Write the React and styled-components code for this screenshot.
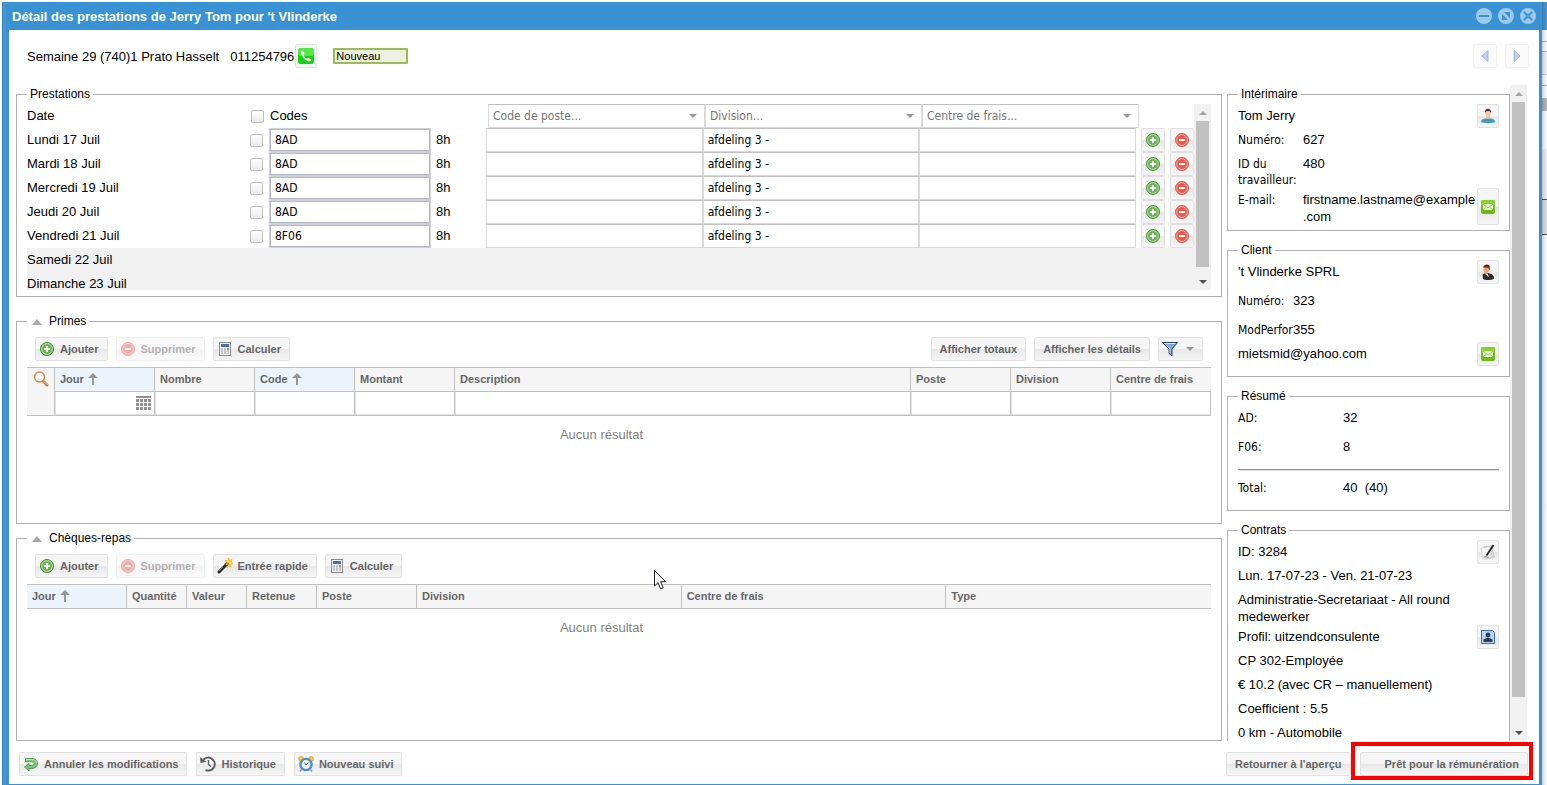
import React from "react";
import styled, { createGlobalStyle, css } from "styled-components";

const days = [
  { label: "Lundi 17 Juil", code: "8AD", hours: "8h" },
  { label: "Mardi 18 Juil", code: "8AD", hours: "8h" },
  { label: "Mercredi 19 Juil", code: "8AD", hours: "8h" },
  { label: "Jeudi 20 Juil", code: "8AD", hours: "8h" },
  { label: "Vendredi 21 Juil", code: "8F06", hours: "8h" },
];

const weekend = ["Samedi 22 Juil", "Dimanche 23 Juil"];

const filters = ["Code de poste...", "Division...", "Centre de frais..."];

const primeColumns = [
  { label: "Jour", width: 100, sorted: true, date: true },
  { label: "Nombre", width: 100 },
  { label: "Code", width: 100, sorted: true },
  { label: "Montant", width: 100 },
  { label: "Description" },
  { label: "Poste", width: 100 },
  { label: "Division", width: 100 },
  { label: "Centre de frais", width: 100 },
];

const chequeColumns = [
  { label: "Jour", width: 100, sorted: true },
  { label: "Quantité", width: 60 },
  { label: "Valeur", width: 60 },
  { label: "Retenue", width: 70 },
  { label: "Poste", width: 100 },
  { label: "Division" },
  { label: "Centre de frais" },
  { label: "Type" },
];

const Svg = ({ size = 16, children }) => (
  <svg width={size} height={size} viewBox={`0 0 ${size} ${size}`} aria-hidden="true">
    {children}
  </svg>
);

const PlusIcon = () => (
  <Svg>
    <circle cx="8" cy="8" r="6.5" fill="#6cb552" stroke="#3f8f35" />
    <circle cx="8" cy="8" r="5.4" fill="none" stroke="#b6dda8" />
    <path d="M8 5v6M5 8h6" stroke="#fff" strokeWidth="2" />
  </Svg>
);

const MinusIcon = () => (
  <Svg>
    <circle cx="8" cy="8" r="6.5" fill="#e9594a" stroke="#d0584c" />
    <circle cx="8" cy="8" r="5.4" fill="none" stroke="#f6aaa0" />
    <path d="M5 8h6" stroke="#fff" strokeWidth="2" />
  </Svg>
);

const CalculatorIcon = () => (
  <Svg>
    <rect x="2.5" y="1.5" width="11" height="13" fill="#f4f4f4" stroke="#8b8b8b" />
    <rect x="4" y="3" width="8" height="3" fill="#3f6fb5" />
    <path d="M4 8h8M4 10h8M4 12h8" stroke="#8a8fa0" strokeDasharray="2 1" />
    <path d="M10 8h2" stroke="#e0403a" />
  </Svg>
);

const WandIcon = () => (
  <Svg>
    <path
      d="M11.5 0l1 2.500L15 1.400l-.8 2.600 1.800 1.500-2.300.8.6 3-2.300-1.500L10 9.500l-.5-2.700L7 6l2.200-1.500L8.500 2l2.200.9z"
      fill="#ffd23a"
      stroke="#e5a416"
      strokeWidth=".6"
    />
    <path d="M2 14L10 6" stroke="#2b2b2b" strokeWidth="3" strokeLinecap="round" />
    <path d="M2.500 12.500L6 9" stroke="#8a8a8a" strokeWidth=".8" />
    <path d="M9 7l1.500-1.500" stroke="#f4f4f4" strokeWidth="1.500" />
  </Svg>
);

const FilterIcon = () => (
  <Svg>
    <path d="M.5 1.500h15L10 8v7l-3-2.500V8z" fill="#7fa6dc" stroke="#25415f" />
    <path d="M2.500 2.500h11" stroke="#dcebfa" />
    <path d="M4.500 4L8 8v4" fill="none" stroke="#c6dbf3" />
  </Svg>
);

const SearchIcon = () => (
  <Svg>
    <path d="M10.500 10.500l3.500 3.500" stroke="#b9824a" strokeWidth="3" strokeLinecap="round" />
    <path d="M11 10.500l3.500 3.500" stroke="#f3c88e" />
    <circle cx="6.500" cy="6" r="5" fill="#eef6fb" stroke="#cf8a4a" strokeWidth="1.500" />
  </Svg>
);

const UndoIcon = () => (
  <Svg>
    <path
      d="M2.500 2.500H9c3.200 0 5.500 2 5.500 4.800S12.200 12.500 9 12.500H6V15l-4.500-4L6 7.500v2h2.800c1.300 0 2-.8 2-2s-.7-1.700-2-1.700H2.500z"
      fill="#7cc576"
      stroke="#3e8c43"
      strokeWidth=".8"
    />
    <path d="M3 3.500h6c2.500 0 4.500 1.500 4.500 3.500" fill="none" stroke="#b9e3b3" />
  </Svg>
);

const HistoryIcon = () => (
  <Svg>
    <path d="M2.500 5A6.500 6.500 0 1 1 5.500 14" fill="none" stroke="#606060" strokeWidth="2" />
    <path d="M0 1l.5 6 6-1z" fill="#606060" />
    <path d="M8.500 4v4.500l2.500 2" fill="none" stroke="#606060" strokeWidth="1.500" />
  </Svg>
);

const AlarmIcon = () => (
  <Svg>
    <circle cx="3" cy="3" r="2.500" fill="#f7c63c" stroke="#d99a1d" strokeWidth=".6" />
    <circle cx="13" cy="3" r="2.500" fill="#f7c63c" stroke="#d99a1d" strokeWidth=".6" />
    <path d="M3.500 13.500L2 15.500M12.500 13.500l1.500 2" stroke="#999" strokeWidth="1.500" />
    <circle cx="8" cy="8.500" r="5.600" fill="#f4f9fd" stroke="#4f8fd0" strokeWidth="2.400" />
    <path d="M6.500 6.500L8 9l2.500-2.500" fill="none" stroke="#555" />
  </Svg>
);

const PhoneIcon = () => (
  <Svg>
    <rect width="16" height="16" rx="3" fill="#14d410" />
    <rect width="16" height="8" rx="3" fill="#55e64a" />
    <path
      d="M4.500 2.500c-1.500.8-1.800 2-1 4 1.200 3 3 5 6 6.500 1.500.7 3 .4 3.800-1l-2.800-2.200-1.500 1C7.500 10 6 8.500 5.300 6.700l1.200-1.300z"
      fill="#fff"
    />
  </Svg>
);

const MailIcon = () => (
  <Svg>
    <rect x="1" y="1" width="14" height="14" rx="2" fill="#6dbb10" />
    <rect x="1" y="1" width="14" height="6" rx="2" fill="#86d42b" />
    <rect x="3" y="5" width="10" height="6" fill="#f3fbe8" />
    <path d="M3 5l5 4 5-4M3 11l3.500-3M13 11L9.500 8" fill="none" stroke="#6fb52a" strokeWidth=".8" />
  </Svg>
);

const WorkerIcon = () => (
  <Svg>
    <path d="M1 14c0-2.500 2.500-3.800 7-3.800s7 1.300 7 3.800c-2 1.500-12 1.500-14 0z" fill="#3f9bc4" />
    <path d="M6.500 8.500h3l.5 2.500H6z" fill="#e9b48e" />
    <ellipse cx="8" cy="5.500" rx="2.700" ry="3.700" fill="#f3c7a5" />
    <path d="M5 5c-.3-3 1-4.300 3-4.300s3.300 1.300 3 4.300C10.500 3.500 9.500 3 8 3s-2.500.5-3 2z" fill="#4a3428" />
  </Svg>
);

const ClientIcon = () => (
  <Svg>
    <path d="M2.500 11c1-2 4.500-2.500 7-1.500 3 .6 4.700 2 4.500 5-2 2-8.500 2-11 .5z" fill="#2d2d2d" />
    <path d="M4.500 9.500h3L9 13z" fill="#fff" />
    <ellipse cx="6.300" cy="5.500" rx="2.900" ry="4" fill="#eba77c" />
    <path d="M3.200 3.500C3.500 1.500 5 .5 7.300.6c2.300.2 3.200 2 2.400 6L8.300 3.800z" fill="#6b2a1a" />
  </Svg>
);

const EditIcon = () => (
  <Svg>
    <path d="M4 2.500l8-1 2.500 12-9 1.500z" fill="#d6d6d6" stroke="#b8b8b8" strokeWidth=".5" />
    <path d="M1 4l9-1.500 1.500 11L3 15z" fill="#f3f3f3" stroke="#bcbcbc" strokeWidth=".5" />
    <path d="M13.500 1L6.500 11.500" stroke="#222" strokeWidth="1.800" />
    <path d="M6.500 11.500L5.500 13M4 13h5" fill="none" stroke="#777" strokeWidth=".8" />
  </Svg>
);

const ProfileIcon = () => (
  <Svg>
    <path d="M1.500 1.500h11l2 2v11h-13z" fill="#b8d5ee" stroke="#3e6ea8" />
    <circle cx="8" cy="6" r="2.400" fill="#2a3e5c" />
    <path d="M3.500 13v-2.500l3-1.500h3l3 1.500V13z" fill="#2a3e5c" />
  </Svg>
);

const NavArrow = ({ flip }) => (
  <Svg>
    <path
      d={flip ? "M5 2.500v11L11 8z" : "M11 2.500v11L5 8z"}
      fill="#bdd0f2"
      stroke="#8da9dc"
      strokeWidth=".8"
    />
  </Svg>
);

const SortArrow = () => (
  <svg width="10" height="12" viewBox="0 0 10 12" aria-hidden="true">
    <path d="M5 0l5 5H6v7H4V5H0z" fill="#979797" />
  </svg>
);

const Caret = ({ up, color = "#979797" }) => (
  <svg width="8" height="4" viewBox="0 0 8 4" aria-hidden="true">
    <path d={up ? "M0 4h8L4 0z" : "M0 0h8L4 4z"} fill={color} />
  </svg>
);

const CalendarIcon = () => (
  <Svg>
    <path d="M0 1h15v2H0z" fill="#8f8f8f" />
    <path d="M0 5.500h15M0 9.500h15M0 13.500h15" stroke="#8f8f8f" strokeWidth="3" strokeDasharray="3 1" />
  </Svg>
);

const Scrollbar = ({ thumb }) => (
  <Track>
    <Arrow>
      <Caret up color="#a3a3a3" />
    </Arrow>
    <Thumb style={{ height: thumb }} />
    <Arrow $end>
      <Caret color="#505050" />
    </Arrow>
  </Track>
);

const ColumnHead = ({ column }) => (
  <HeadCell $sorted={column.sorted} scope="col">
    {column.label}
    {column.sorted && <SortArrow />}
  </HeadCell>
);

const SectionTitle = ({ children }) => (
  <FoldLegend>
    <FoldButton type="button" aria-label={`Replier ${children}`}>
      <svg width="10" height="6" viewBox="0 0 10 6" aria-hidden="true">
        <path d="M5 0l5 6H0z" fill="#a8a8a8" />
      </svg>
    </FoldButton>
    {children}
  </FoldLegend>
);

const Prestations = () => (
  <Fieldset>
    <Legend>Prestations</Legend>
    <DayScroller>
      <DayTable>
        <thead>
          <DayRow $head>
            <th>Date</th>
            <td>
              <Checkbox type="checkbox" aria-label="Tout sélectionner" />
            </td>
            <th>Codes</th>
            <td />
            {filters.map((name) => (
              <td key={name}>
                <Combo>
                  <select aria-label={name} defaultValue="">
                    <option value="">{name}</option>
                  </select>
                  <Caret />
                </Combo>
              </td>
            ))}
          </DayRow>
        </thead>
        <tbody>
          {days.map((day) => (
            <DayRow key={day.label}>
              <th>{day.label}</th>
              <td>
                <Checkbox type="checkbox" aria-label={day.label} />
              </td>
              <td>
                <CodeInput aria-label={`Code ${day.label}`} defaultValue={day.code} />
              </td>
              <Hours>{day.hours}</Hours>
              <td>
                <CellInput aria-label={`Code de poste ${day.label}`} />
              </td>
              <td>
                <CellInput aria-label={`Division ${day.label}`} defaultValue="afdeling 3 -" />
              </td>
              <td>
                <CellInput aria-label={`Centre de frais ${day.label}`} />
              </td>
              <Actions>
                <IconButton type="button" aria-label="Ajouter">
                  <PlusIcon />
                </IconButton>
                <IconButton type="button" aria-label="Supprimer">
                  <MinusIcon />
                </IconButton>
              </Actions>
            </DayRow>
          ))}
          {weekend.map((label) => (
            <DayRow key={label} $off>
              <th>{label}</th>
            </DayRow>
          ))}
        </tbody>
      </DayTable>
      <Scrollbar thumb="146px" />
    </DayScroller>
  </Fieldset>
);

const Primes = () => (
  <Fieldset $grow>
    <SectionTitle>Primes</SectionTitle>
    <Toolbar>
      <Button type="button">
        <PlusIcon />
        Ajouter
      </Button>
      <Button type="button" disabled>
        <MinusIcon />
        Supprimer
      </Button>
      <Button type="button">
        <CalculatorIcon />
        Calculer
      </Button>
      <Spacer />
      <Button type="button" $plain>
        Afficher totaux
      </Button>
      <Button type="button" $plain>
        Afficher les détails
      </Button>
      <Button type="button" $menu aria-label="Filtre">
        <FilterIcon />
        <Caret />
      </Button>
    </Toolbar>
    <Grid>
      <colgroup>
        <col width="28" />
        {primeColumns.map((column) => (
          <col key={column.label} width={column.width} />
        ))}
      </colgroup>
      <thead>
        <tr>
          <SearchCell rowSpan="2">
            <SearchIcon />
          </SearchCell>
          {primeColumns.map((column) => (
            <ColumnHead key={column.label} column={column} />
          ))}
        </tr>
        <tr>
          {primeColumns.map((column) => (
            <FilterCell key={column.label}>
              <FilterBox>
                <input aria-label={column.label} />
                {column.date && <CalendarIcon />}
              </FilterBox>
            </FilterCell>
          ))}
        </tr>
      </thead>
    </Grid>
    <Empty>Aucun résultat</Empty>
  </Fieldset>
);

const Cheques = () => (
  <Fieldset $grow>
    <SectionTitle>Chèques-repas</SectionTitle>
    <Toolbar>
      <Button type="button">
        <PlusIcon />
        Ajouter
      </Button>
      <Button type="button" disabled>
        <MinusIcon />
        Supprimer
      </Button>
      <Button type="button">
        <WandIcon />
        Entrée rapide
      </Button>
      <Button type="button">
        <CalculatorIcon />
        Calculer
      </Button>
    </Toolbar>
    <Grid $closed>
      <colgroup>
        {chequeColumns.map((column) => (
          <col key={column.label} width={column.width} />
        ))}
      </colgroup>
      <thead>
        <tr>
          {chequeColumns.map((column) => (
            <ColumnHead key={column.label} column={column} />
          ))}
        </tr>
      </thead>
    </Grid>
    <Empty>Aucun résultat</Empty>
  </Fieldset>
);

const Sidebar = () => (
  <Side>
    <SideContent>
      <Fieldset $side $tight>
        <Legend>Intérimaire</Legend>
        <InfoRow>
          <Value>Tom Jerry</Value>
          <IconButton type="button" $small aria-label="Fiche intérimaire">
            <WorkerIcon />
          </IconButton>
        </InfoRow>
        <InfoRow>
          <Name $width={65}>Numéro:</Name>
          <Value>627</Value>
        </InfoRow>
        <InfoRow>
          <Name $width={65}>ID du travailleur:</Name>
          <Value>480</Value>
        </InfoRow>
        <InfoRow>
          <Name $width={65}>E-mail:</Name>
          <Value>firstname.lastname@example.com</Value>
          <IconButton type="button" $small aria-label="Envoyer un e-mail">
            <MailIcon />
          </IconButton>
        </InfoRow>
      </Fieldset>
      <Fieldset $side>
        <Legend>Client</Legend>
        <InfoRow $tall>
          <Value>'t Vlinderke SPRL</Value>
          <IconButton type="button" $small aria-label="Fiche client">
            <ClientIcon />
          </IconButton>
        </InfoRow>
        <InfoRow $tall>
          <Name $width={55}>Numéro:</Name>
          <Value>323</Value>
        </InfoRow>
        <InfoRow>
          <Name $width={55}>ModPerfor</Name>
          <Value>355</Value>
        </InfoRow>
        <InfoRow>
          <Value>mietsmid@yahoo.com</Value>
          <IconButton type="button" $small aria-label="Envoyer un e-mail">
            <MailIcon />
          </IconButton>
        </InfoRow>
      </Fieldset>
      <Fieldset $side>
        <Legend>Résumé</Legend>
        <InfoRow $tall>
          <Name $width={105}>AD:</Name>
          <Value>32</Value>
        </InfoRow>
        <InfoRow $tall>
          <Name $width={105}>F06:</Name>
          <Value>8</Value>
        </InfoRow>
        <Rule />
        <InfoRow>
          <Name $width={105}>Total:</Name>
          <Value>40&nbsp; (40)</Value>
        </InfoRow>
      </Fieldset>
      <Fieldset $side>
        <Legend>Contrats</Legend>
        <InfoRow>
          <Value>ID: 3284</Value>
          <IconButton type="button" $small aria-label="Modifier le contrat">
            <EditIcon />
          </IconButton>
        </InfoRow>
        <InfoRow>
          <Value>Lun. 17-07-23 - Ven. 21-07-23</Value>
        </InfoRow>
        <InfoRow>
          <Value>Administratie-Secretariaat - All round medewerker</Value>
        </InfoRow>
        <InfoRow>
          <Value>Profil: uitzendconsulente</Value>
          <IconButton type="button" $small aria-label="Profil">
            <ProfileIcon />
          </IconButton>
        </InfoRow>
        <InfoRow>
          <Value>CP 302-Employée</Value>
        </InfoRow>
        <InfoRow>
          <Value>€ 10.2 (avec CR – manuellement)</Value>
        </InfoRow>
        <InfoRow>
          <Value>Coefficient : 5.5</Value>
        </InfoRow>
        <InfoRow>
          <Value>0 km - Automobile</Value>
        </InfoRow>
      </Fieldset>
    </SideContent>
    <Scrollbar thumb="595px" />
  </Side>
);

const App = () => {
  return (
    <Page>
      <GlobalStyle />
      <LeftEdge />
      <Window>
        <TitleBar>
          <h1>Détail des prestations de Jerry Tom pour 't Vlinderke</h1>
          <Tool type="button" aria-label="Réduire">
            <Svg>
              <circle cx="8" cy="8" r="8" fill="#9cc8e9" />
              <path d="M3 8h10" stroke="#3892d4" strokeWidth="2" />
            </Svg>
          </Tool>
          <Tool type="button" aria-label="Restaurer">
            <Svg>
              <circle cx="8" cy="8" r="8" fill="#9cc8e9" />
              <path d="M4 6v6h6zM6 4h6v6z" fill="#3892d4" />
            </Svg>
          </Tool>
          <Tool type="button" aria-label="Fermer">
            <Svg>
              <circle cx="8" cy="8" r="8" fill="#9cc8e9" />
              <path d="M4 4l8 8M12 4l-8 8" stroke="#3892d4" strokeWidth="2" />
            </Svg>
          </Tool>
        </TitleBar>
        <Header>
          <Week>Semaine 29 (740)1 Prato Hasselt</Week>
          <Phone>011254796</Phone>
          <IconButton type="button" $small aria-label="Appeler">
            <PhoneIcon />
          </IconButton>
          <Status>Nouveau</Status>
          <Spacer />
          <Pager>
            <IconButton type="button" $faded aria-label="Précédent">
              <NavArrow />
            </IconButton>
            <IconButton type="button" $faded aria-label="Suivant">
              <NavArrow flip />
            </IconButton>
          </Pager>
        </Header>
        <Main>
          <Sections>
            <Prestations />
            <Primes />
            <Cheques />
          </Sections>
          <Sidebar />
        </Main>
        <Footer>
          <Button type="button">
            <UndoIcon />
            Annuler les modifications
          </Button>
          <Button type="button">
            <HistoryIcon />
            Historique
          </Button>
          <Button type="button">
            <AlarmIcon />
            Nouveau suivi
          </Button>
          <Spacer />
          <Button type="button" $plain>
            Retourner à l'aperçu
          </Button>
          <Highlight>
            <Button type="button">
              <Svg />
              Prêt pour la rémunération
            </Button>
          </Highlight>
        </Footer>
      </Window>
      <RightEdge />
      <Pointer width="13" height="20" viewBox="0 0 13 20" aria-hidden="true">
        <path
          d="M.5.500v15.500l3.500-3.400 2.600 6.200 2.600-1.100-2.600-6h5z"
          fill="#fff"
          stroke="#1c1c2c"
        />
      </Pointer>
    </Page>
  );
};

const GlobalStyle = createGlobalStyle`
  * {
    box-sizing: border-box;
  }
  body {
    margin: 0;
    background: #fff;
    color: #000;
    font: 13px/17px "Liberation Sans", Arial, sans-serif;
  }
  button, input, select {
    font: inherit;
    margin: 0;
  }
`;

const tahoma = css`
  font-family: Tahoma, "DejaVu Sans Condensed", "Noto Sans", sans-serif;
  font-size: 12px;
`;

const Page = styled.div`
  position: relative;
  display: grid;
  grid-template-columns: 4px minmax(0, 1fr) 5px;
  height: 100vh;
  padding: 2px 0 0 2px;
`;

const LeftEdge = styled.div`
  background: #5093c6;
  border-left: 1px solid #2a84c6;
`;

const RightEdge = styled.div`
  background:
    linear-gradient(90deg, rgba(0, 0, 0, 0.18), transparent),
    linear-gradient(
      #4a97d2 28px,
      #fff 28px 39px,
      #b5b5b5 39px 40px,
      #fff 40px 49px,
      #b5b5b5 49px 50px,
      #f5f5f5 50px 72px,
      #c8c8c8 72px 73px,
      #fff 73px 83px,
      #b5b5b5 83px 84px,
      #fff 84px 96px,
      #b8b8b8 96px 109px,
      #fff 109px 147px,
      #f2f2f2 147px 197px,
      #555 197px 198px,
      #e0e0e0 198px 232px,
      #555 232px 233px,
      #fff 233px
    );
`;

const Window = styled.div`
  display: flex;
  flex-direction: column;
  min-height: 0;
  background: #fff;
  border: solid #3892d4;
  border-width: 0 3px 1px;
`;

const TitleBar = styled.header`
  display: flex;
  align-items: center;
  gap: 6px;
  flex: none;
  height: 28px;
  padding: 0 3px;
  background: #3892d4;

  h1 {
    flex: 1;
    margin: 0;
    color: #fff;
    font-size: 13px;
    font-weight: bold;
  }
`;

const Tool = styled.button`
  display: flex;
  padding: 0;
  border: none;
  background: none;
  cursor: pointer;
`;

const Header = styled.div`
  display: flex;
  align-items: center;
  flex: none;
  padding: 14px 10px 17px 18px;
`;

const Week = styled.span`
  margin-right: 11px;
`;

const Phone = styled.span`
  margin-right: 1px;
`;

const Status = styled.span`
  width: 75px;
  margin-left: 16px;
  padding-left: 1px;
  border: 2px solid #9bbb59;
  border-radius: 1px;
  background: #ebf1de;
  font-size: 11px;
  line-height: 12px;
`;

const Spacer = styled.div`
  flex: 1;
`;

const Pager = styled.div`
  display: flex;
  gap: 8px;
`;

const Main = styled.main`
  display: grid;
  grid-template-columns: minmax(0, 1fr) 300px;
  grid-template-rows: minmax(0, 1fr);
  gap: 5px;
  flex: 1;
  min-height: 0;
  padding: 0 12px 0 7px;
`;

const Sections = styled.div`
  display: flex;
  flex-direction: column;
  min-height: 0;
  padding-top: 1px;
`;

const Fieldset = styled.fieldset`
  flex: none;
  min-width: 0;
  margin: 0 0 16px;
  padding: 1px 10px 6px;
  border: 1px solid #b0b0b0;

  ${(props) =>
    props.$grow &&
    css`
      flex: 1 1 0;
      padding: 0 10px;
      margin-bottom: 6px;

      &:last-child {
        margin-bottom: 0;
      }
    `}

  ${(props) =>
    props.$side &&
    css`
      margin-bottom: 11px;
      padding-bottom: ${props.$tight ? "5px" : "10px"};
    `}
`;

const Legend = styled.legend`
  padding: 0 3px;
  font-size: 12px;
  line-height: 17px;
`;

const FoldLegend = styled(Legend)`
  display: flex;
  align-items: center;
  gap: 7px;
  padding-left: 5px;
`;

const FoldButton = styled.button`
  display: flex;
  padding: 0;
  border: none;
  background: none;
  cursor: pointer;
`;

const DayScroller = styled.div`
  display: flex;
  height: 186px;
  overflow: hidden;
`;

const DayTable = styled.table`
  display: block;
  flex: 1;
  min-width: 0;

  thead,
  tbody {
    display: block;
  }
`;

const DayRow = styled.tr`
  display: grid;
  grid-template-columns: ${(props) =>
    props.$head
      ? "223px 20px 161px 57px repeat(3, minmax(0, 1fr)) 55px"
      : "223px 19px 162px 55px repeat(3, minmax(0, 1fr)) 58px"};
  height: 24px;
  background: ${(props) => (props.$off ? "#f1f1f1" : "#fff")};

  th,
  td {
    padding: 0;
    font-weight: normal;
    text-align: left;
    line-height: 23px;
  }
`;

const Checkbox = styled.input`
  appearance: none;
  display: block;
  width: 13px;
  height: 13px;
  margin: 6px 6px 0 auto;
  border: 1px solid #bcbcbc;
  border-radius: 2px;
  background: linear-gradient(#fff, #ececec);
`;

const Combo = styled.div`
  display: grid;
  align-items: center;

  select {
    grid-area: 1 / 1;
    appearance: none;
    width: 100%;
    height: 24px;
    padding: 0 20px 0 4px;
    border: 1px solid #d9d9d9;
    border-top-color: #c0c0c0;
    border-radius: 0;
    background: #fff;
    color: #757575;
    ${tahoma}
  }

  svg {
    grid-area: 1 / 1;
    justify-self: end;
    margin-right: 8px;
    pointer-events: none;
  }
`;

const CellInput = styled.input`
  display: block;
  width: 100%;
  height: 24px;
  padding: 0 4px;
  border: 1px solid #d9d9d9;
  border-top-color: #c0c0c0;
  background: #fff;
  color: #000;
  ${tahoma}
`;

const CodeInput = styled(CellInput)`
  padding: 0 5px;
  border-color: #d0d0d4;
  box-shadow: inset 0 0 0 1px #b5b8c8;
`;

const Hours = styled.td`
  && {
    padding-left: 5px;
  }
`;

const Actions = styled.td`
  && {
    display: flex;
    gap: 5px;
    padding-left: 5px;
  }
`;

const raised = css`
  border: 1px solid #e1e1e1;
  border-radius: 2px;
  background: linear-gradient(#f6f6f6, #f5f5f5 50%, #e8e8e8 51%, #f5f5f5);
  cursor: pointer;
`;

const IconButton = styled.button`
  display: flex;
  align-items: center;
  justify-content: center;
  flex: none;
  width: ${(props) => (props.$small ? "22px" : "24px")};
  min-height: 24px;
  padding: 0;
  ${raised}
  ${(props) =>
    props.$faded &&
    css`
      border-color: #efefef;
      background: #fafafa;
    `}
`;

const Button = styled.button`
  display: flex;
  align-items: center;
  gap: ${(props) => (props.$menu ? "8px" : "5px")};
  height: 24px;
  padding: 0 8px 0 ${(props) => (props.$plain ? "8px" : "3px")};
  color: #666;
  font-size: 11px;
  font-weight: bold;
  white-space: nowrap;
  ${raised}

  &:disabled {
    opacity: 0.5;
    cursor: default;
  }
`;

const Toolbar = styled.div`
  display: flex;
  gap: 8px;
  padding: 7px 8px 6px;
`;

const Grid = styled.table`
  width: 100%;
  table-layout: fixed;
  border-collapse: separate;
  border-spacing: 0;
  border-bottom: ${(props) => (props.$closed ? "1px solid #c0c0c0" : "none")};
`;

const HeadCell = styled.th`
  height: 24px;
  padding: 0 5px;
  border: solid #c0c0c0;
  border-width: 1px 1px 0 0;
  background: ${(props) => (props.$sorted ? "#ebf4fb" : "#f5f5f5")};
  color: #666;
  font-size: 11px;
  text-align: left;
  white-space: nowrap;

  &:last-child {
    border-right: none;
  }

  svg {
    margin-left: 4px;
    vertical-align: -2px;
  }
`;

const SearchCell = styled.td`
  padding: 3px 0 0;
  border: 1px solid #c0c0c0;
  border-left: none;
  background: #f5f5f5;
  text-align: center;
  vertical-align: top;
`;

const FilterCell = styled.td`
  padding: 0;
  border: 1px solid #c0c0c0;
  border-left: none;
`;

const FilterBox = styled.div`
  display: flex;
  align-items: center;
  height: 23px;
  padding-right: 2px;
  border: solid #e4e4e4;
  border-width: 0 0 1px 1px;

  input {
    flex: 1;
    min-width: 0;
    border: none;
    outline: none;
  }
`;

const Empty = styled.div`
  padding: 10px 35px 0 0;
  color: #808080;
  text-align: center;
`;

const Side = styled.aside`
  display: flex;
  min-height: 0;
`;

const SideContent = styled.div`
  flex: 1;
  min-width: 0;
  padding-top: 1px;
  overflow: hidden;
`;

const InfoRow = styled.div`
  display: flex;
  align-items: ${(props) => (props.$tall ? "flex-start" : "stretch")};
  min-height: ${(props) => (props.$tall ? "29px" : "24px")};
`;

const Name = styled.span`
  flex: none;
  width: ${(props) => props.$width}px;
  padding-top: 4px;
  line-height: 16px;
  ${tahoma}
`;

const Value = styled.span`
  flex: 1;
  min-width: 0;
  padding-top: 3px;
  overflow-wrap: anywhere;
`;

const Rule = styled.hr`
  height: 2px;
  margin: 5px 0;
  border: none;
  border-top: 1px solid #999;
  background: #ddd;
`;

const Track = styled.div`
  display: flex;
  flex-direction: column;
  flex: none;
  width: 17px;
  padding: 0 2px;
  background: #f1f1f1;
`;

const Arrow = styled.div`
  display: flex;
  align-items: center;
  justify-content: center;
  flex: none;
  height: 17px;
  margin-top: ${(props) => (props.$end ? "auto" : "0")};
`;

const Thumb = styled.div`
  flex: 0 1 auto;
  background: #c1c1c1;
`;

const Footer = styled.footer`
  display: flex;
  gap: 9px;
  flex: none;
  padding: 11px 11px 8px 10px;
`;

const Highlight = styled.div`
  position: relative;

  &::after {
    content: "";
    position: absolute;
    inset: -10px -5px -4px -9px;
    border: 4px solid #f00;
    pointer-events: none;
  }
`;

const Pointer = styled.svg`
  position: absolute;
  left: 654px;
  top: 570px;
`;

export default App;
